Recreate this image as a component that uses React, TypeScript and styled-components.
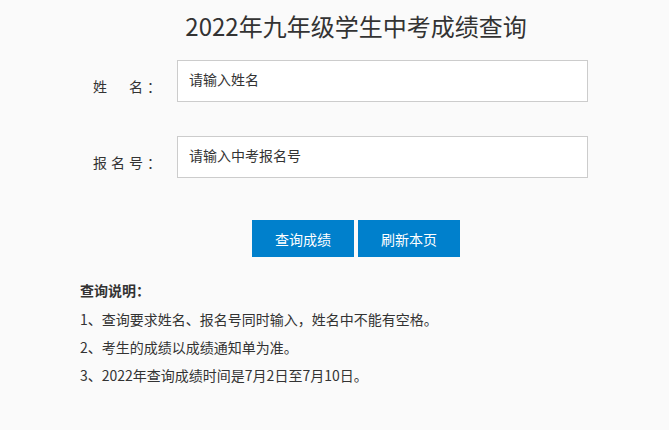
import styled, { createGlobalStyle } from "styled-components";

const GlobalStyle = createGlobalStyle`
  html, body {
    margin: 0;
    padding: 0;
    background: #fafafa;
  }
  body {
    font-family: "Noto Sans CJK SC", "Noto Sans", sans-serif;
    color: #333;
  }
`;

const Page = styled.div`
  width: 552px;
  margin-left: 80px;
  padding-top: 8px;
  height: 422px;
`;

const Title = styled.h1`
  margin: 0;
  font-size: 24px;
  font-weight: normal;
  line-height: 36px;
  text-align: center;
  color: #333;
`;

const Form = styled.div`
  margin-top: 16px;
  display: flex;
  flex-direction: column;
  row-gap: 34px;
`;

const Row = styled.div`
  display: flex;
  align-items: flex-start;
`;

const Label = styled.label`
  width: 84px;
  padding-left: 13px;
  padding-top: 17px;
  font-size: 14px;
  line-height: 18px;
  letter-spacing: 4px;
  color: #333;
`;

const Input = styled.input`
  box-sizing: border-box;
  width: 411px;
  height: 42px;
  border: 1px solid #ccc;
  background: #fff;
  padding: 0 11px 5px;
  font-family: inherit;
  font-size: 14px;
  color: #333;
  outline: none;

  &::placeholder {
    color: #333;
  }
`;

const Buttons = styled.div`
  margin-top: 42px;
  display: flex;
  justify-content: center;
  column-gap: 4px;
`;

const Button = styled.button`
  width: 102px;
  height: 37px;
  border: none;
  background: #0080cc;
  color: #fff;
  font-family: inherit;
  font-size: 14px;
  cursor: pointer;
`;

const Notes = styled.div`
  margin-top: 19px;
  font-size: 14px;
  line-height: 28px;
`;

const NotesTitle = styled.div`
  font-weight: bold;
  margin-bottom: 1px;
`;

const Note = styled.p`
  margin: 0;
`;

export default function App() {
  return (
    <>
      <GlobalStyle />
      <Page>
        <Title>2022年九年级学生中考成绩查询</Title>
        <Form>
          <Row>
            <Label>姓　名：</Label>
            <Input placeholder="请输入姓名" />
          </Row>
          <Row>
            <Label>报名号：</Label>
            <Input placeholder="请输入中考报名号" />
          </Row>
        </Form>
        <Buttons>
          <Button>查询成绩</Button>
          <Button>刷新本页</Button>
        </Buttons>
        <Notes>
          <NotesTitle>查询说明：</NotesTitle>
          <Note>1、查询要求姓名、报名号同时输入，姓名中不能有空格。</Note>
          <Note>2、考生的成绩以成绩通知单为准。</Note>
          <Note>3、2022年查询成绩时间是7月2日至7月10日。</Note>
        </Notes>
      </Page>
    </>
  );
}
